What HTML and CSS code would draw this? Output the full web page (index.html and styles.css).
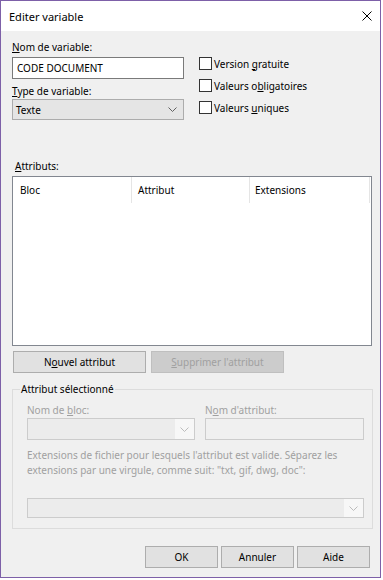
FILE: index.html
```html
<!DOCTYPE html>
<html lang="fr">

<head>
  <meta charset="UTF-8" />
  <title>Editer variable</title>
  <link rel="stylesheet" href="styles.css">
</head>

<body>

  <div class="window">
    <div class="titlebar">
      <span class="title">Editer variable</span>
      <svg class="close" width="10" height="10" viewBox="0 0 10 10">
        <path d="M0.5 0.5 L9.5 9.5 M9.5 0.5 L0.5 9.5" stroke="#000" stroke-width="1" fill="none" />
      </svg>
    </div>

    <div class="client">
      <div class="top">
        <div class="left">
          <div class="lbl"><u>N</u>om de variable:</div>
          <div class="textbox">CODE DOCUMENT</div>
          <div class="lbl type-lbl"><u>T</u>ype de variable:</div>
          <div class="combo">
            <span>Texte</span>
            <svg width="9" height="5" viewBox="0 0 9 5">
              <polyline points="0.5,0.5 4.5,4.5 8.5,0.5" stroke="#606060" fill="none" />
            </svg>
          </div>
        </div>

        <div class="checks">
          <div class="check"><span class="box"></span><span>Version <u>g</u>ratuite</span></div>
          <div class="check"><span class="box"></span><span>Valeurs o<u>b</u>ligatoires</span></div>
          <div class="check"><span class="box"></span><span>Valeurs <u>u</u>niques</span></div>
        </div>
      </div>

      <div class="lbl attr-lbl"><u>A</u>ttributs:</div>
      <div class="list">
        <div class="list-head">
          <div class="col col-bloc">Bloc</div>
          <div class="col col-attr">Attribut</div>
          <div class="col col-ext">Extensions</div>
        </div>
      </div>

      <div class="actions">
        <div class="btn wide">N<u>o</u>uvel attribut</div>
        <div class="btn wide disabled"><u>S</u>upprimer l'attribut</div>
      </div>

      <fieldset class="group">
        <legend>Attribut sélectionné</legend>
        <div class="group-row">
          <div class="field field-bloc">
            <div class="dlbl">Nom de <u>b</u>loc:</div>
            <div class="dcombo">
              <span class="dcombo-arrow">
                <svg width="9" height="5" viewBox="0 0 9 5">
                  <polyline points="0.5,0.5 4.5,4.5 8.5,0.5" stroke="#bcbcbc" fill="none" />
                </svg>
              </span>
            </div>
          </div>
          <div class="field field-name">
            <div class="dlbl">N<u>o</u>m d'attribut:</div>
            <div class="dtext"></div>
          </div>
        </div>
        <div class="hint">Extensions de fichier pour lesquels l'attribut est valide. Séparez les extensions par une virgule, comme suit: "txt, gif, dwg, doc":</div>
        <div class="dcombo ext-combo">
          <span class="dcombo-arrow">
            <svg width="9" height="5" viewBox="0 0 9 5">
              <polyline points="0.5,0.5 4.5,4.5 8.5,0.5" stroke="#bcbcbc" fill="none" />
            </svg>
          </span>
        </div>
      </fieldset>

      <div class="footer">
        <div class="btn small">OK</div>
        <div class="btn small">Annuler</div>
        <div class="btn small">Aide</div>
      </div>
    </div>
  </div>

</body>

</html>
```

FILE: styles.css
```css
* {
  margin: 0;
  padding: 0;
  box-sizing: border-box;
}

body {
  background: #fff;
  font-family: "Noto Sans", "Open Sans", sans-serif;
  font-size: 10px;
  color: #000;
}

u {
  text-decoration: underline;
  text-underline-offset: 1px;
}

.window {
  width: 381px;
  height: 578px;
  border: 1px solid #7d60a8;
  display: flex;
  flex-direction: column;
  background: #f0f0f0;
}

.titlebar {
  height: 30px;
  background: #fff;
  display: flex;
  align-items: center;
  justify-content: space-between;
  padding: 0 8px 0 8px;
}

.title {
  font-size: 11px;
}

.client {
  flex: 1;
  padding: 0 8px 0 11px;
}

.top {
  display: flex;
}

.left {
  width: 172px;
  padding-top: 8px;
}

.lbl {
  line-height: 16px;
}

.textbox {
  margin-top: 2px;
  height: 22px;
  border: 1px solid #7a7a7a;
  background: #fff;
  padding-left: 4px;
  line-height: 20px;
}

.type-lbl {
  margin-top: 4px;
}

.combo {
  height: 21px;
  border: 1px solid #acacac;
  background: #e5e5e5;
  display: flex;
  align-items: center;
  justify-content: space-between;
  padding: 0 6px 0 3px;
}

.checks {
  margin-left: 15px;
  padding-top: 26px;
  display: flex;
  flex-direction: column;
  gap: 9px;
}

.check {
  display: flex;
  align-items: center;
  height: 13px;
}

.box {
  width: 13px;
  height: 13px;
  border: 1px solid #333;
  background: #fff;
  margin-right: 2px;
}

.attr-lbl {
  margin-top: 38px;
  padding-left: 3px;
}

.list {
  margin-top: 2px;
  height: 170px;
  border: 1px solid #828790;
  background: #fff;
}

.list-head {
  display: flex;
  height: 26px;
}

.col {
  border-right: 1px solid #e5e5e5;
  padding-left: 6px;
  line-height: 26px;
}

.col-bloc {
  width: 119px;
  padding-left: 7px;
}

.col-attr {
  width: 118px;
}

.col-ext {
  width: 120px;
  padding-left: 5px;
}

.actions {
  margin-top: 5px;
  display: flex;
  gap: 5px;
  padding-left: 1px;
}

.btn {
  height: 22px;
  border: 1px solid #adadad;
  background: #e1e1e1;
  text-align: center;
  line-height: 20px;
}

.btn.wide {
  width: 133px;
}

.btn.disabled {
  background: #cccccc;
  border-color: #bfbfbf;
  color: #a0a0a0;
}

.group {
  margin-top: 8px;
  border: 1px solid #dcdcdc;
  padding: 5px 8px 10px 14px;
}

.group legend {
  margin-left: -7px;
  padding: 0 1px;
  line-height: 16px;
}

.group-row {
  display: flex;
  gap: 10px;
}

.field-bloc {
  width: 168px;
}

.field-name {
  width: 159px;
}

.dlbl {
  color: #a0a0a0;
  line-height: 16px;
}

.dcombo {
  height: 22px;
  border: 1px solid #cccccc;
  background: #ececec;
  display: flex;
  justify-content: flex-end;
}

.dcombo-arrow {
  width: 19px;
  background: #f7f7f7;
  display: flex;
  align-items: center;
  justify-content: center;
}

.dtext {
  height: 22px;
  border: 1px solid #cccccc;
  background: #f0f0f0;
}

.hint {
  margin-top: 8px;
  line-height: 15px;
  color: #a0a0a0;
}

.ext-combo {
  margin-top: 20px;
  height: 20px;
}

.footer {
  margin-top: 17px;
  display: flex;
  justify-content: flex-end;
  gap: 3px;
  padding-right: 2px;
}

.btn.small {
  width: 73px;
}
```
